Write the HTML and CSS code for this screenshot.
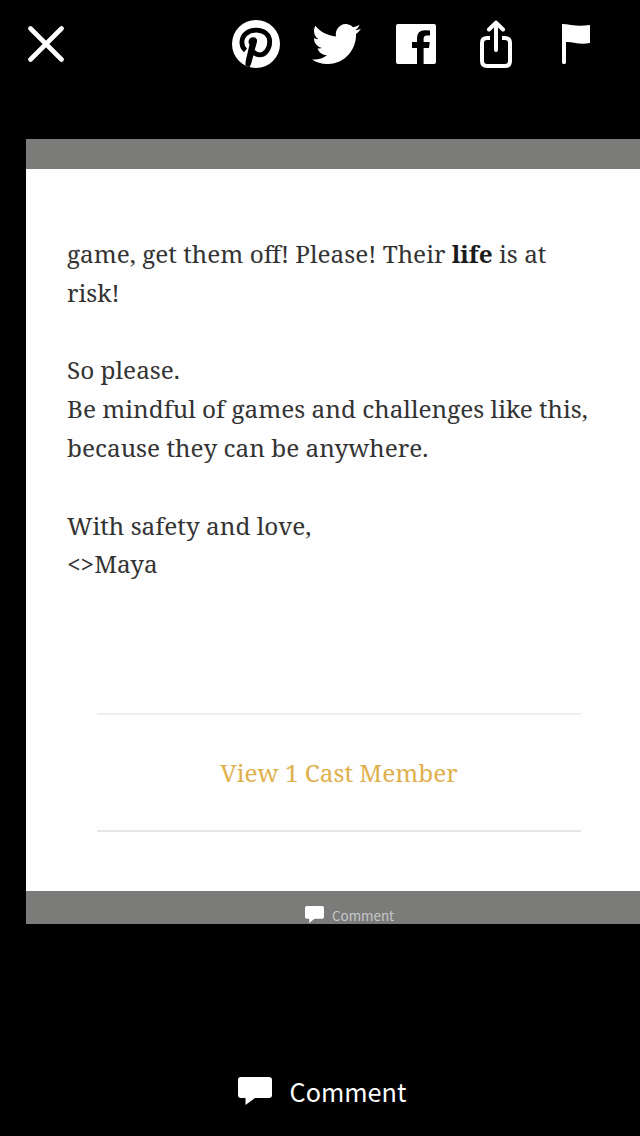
FILE: index.html
```
<!DOCTYPE html>
<html lang="en">
  <head>
    <meta charset="UTF-8" />
    <meta name="viewport" content="width=device-width, initial-scale=1.0" />
    <title>Comment</title>
    <link rel="stylesheet" href="styles.css">
  </head>
  <body>
    <div class="viewer">
      <header class="toolbar">
        <button class="close-btn" aria-label="Close">
          <svg width="36" height="36" viewBox="0 0 36 36">
            <path d="M2.5 2.5 33.5 33.5M33.5 2.5 2.5 33.5" fill="none" stroke="#fff" stroke-width="4.6" stroke-linecap="round" />
          </svg>
        </button>
        <nav class="share-list">
          <button aria-label="Pinterest">
            <svg width="48" height="48" viewBox="0 0 48 48">
              <defs>
                <clipPath id="pin-circle"><circle cx="24" cy="24" r="24" /></clipPath>
              </defs>
              <circle cx="24" cy="24" r="24" fill="#fff" />
              <g clip-path="url(#pin-circle)">
                <path d="M13.500 30.300C11 28.400 9.900 25.500 9.900 22.200C9.900 15.300 15.700 10.100 24.300 10.100C32 10.100 37.700 14.700 37.700 21.500C37.700 29 33.300 34.900 27.500 34.900C24.800 34.900 22.300 33.500 21.200 31.500" fill="none" stroke="#000" stroke-width="4.800" />
                <path d="M16.600 21C17 18.600 18.800 17.200 21.200 17.200C23.900 17.200 25.300 18.900 25 21.500C24.600 24 23.200 27.500 22.700 30.500L19.500 42.500Q18.600 45.500 16.700 49L13.500 48Q13.200 43 14 39.500L17.500 24.800Q16.300 23 16.600 21Z" fill="#000" />
              </g>
            </svg>
          </button>
          <button aria-label="Twitter">
            <svg width="49" height="40" viewBox="0 2.250 24 19.500" preserveAspectRatio="none">
              <path fill="#fff" d="M23.953 4.570a10 10 0 0 1-2.825.775 4.958 4.958 0 0 0 2.163-2.723c-.951.555-2.005.959-3.127 1.184a4.920 4.920 0 0 0-8.384 4.482C7.690 8.095 4.067 6.130 1.640 3.162a4.822 4.822 0 0 0-.666 2.475c0 1.710.870 3.213 2.188 4.096a4.904 4.904 0 0 1-2.228-.616v.060a4.923 4.923 0 0 0 3.946 4.827 4.996 4.996 0 0 1-2.212.085 4.936 4.936 0 0 0 4.604 3.417 9.867 9.867 0 0 1-6.102 2.105c-.390 0-.779-.023-1.170-.067a13.995 13.995 0 0 0 7.557 2.209c9.053 0 13.998-7.496 13.998-13.985 0-.210 0-.420-.015-.630A9.935 9.935 0 0 0 24 4.590z" />
            </svg>
          </button>
          <button aria-label="Facebook">
            <svg width="40" height="40" viewBox="0 0 40 40">
              <rect width="40" height="40" rx="2" fill="#fff" />
              <path d="M21 40V24H16V18H21V14.500Q21 6.300 29 6.300Q32 6.300 34 6.600V11.600H31Q27.600 11.600 27.600 15V18H33.700L33 24H27.600V40Z" fill="#000" />
            </svg>
          </button>
          <button aria-label="Share">
            <svg width="32" height="48" viewBox="0 0 32 48" fill="none" stroke="#fff" stroke-width="4">
              <path d="M10 18H7Q2 18 2 23V41Q2 46 7 46H25Q30 46 30 41V23Q30 18 25 18H22" />
              <path d="M16 30V3M9 9.500 16 2.700 23 9.500" stroke-linecap="round" stroke-linejoin="round" />
            </svg>
          </button>
          <button aria-label="Report">
            <svg width="28" height="40" viewBox="0 0 28 40">
              <path d="M0 0Q4 0 9 1.100Q18 2.500 28 1V19Q20 20.600 12 18.700Q8 17.800 4 18V38.500Q4 40 2 40Q0 40 0 38.500Z" fill="#fff" />
            </svg>
          </button>
        </nav>
      </header>

      <main class="photo">
        <div class="photo-bar"></div>
        <div class="page">
          <div class="story">
            <p>game, get them off! Please! Their <b>life</b> is at<br />risk!</p>
            <p>So please.<br />Be mindful of games and challenges like this,<br />because they can be anywhere.</p>
            <p>With safety and love,<br />&lt;&gt;Maya</p>
          </div>
          <div class="cast">View 1 Cast Member</div>
        </div>
        <div class="photo-bar photo-footer">
          <svg width="19" height="17" viewBox="0 0 34 28" preserveAspectRatio="none">
            <path d="M3 0H31Q34 0 34 3V18Q34 21 31 21H17L7.500 28V21H3Q0 21 0 18V3Q0 0 3 0Z" fill="#fff" />
          </svg>
          <span>Comment</span>
        </div>
      </main>

      <footer class="comment-bar">
        <svg width="34" height="28" viewBox="0 0 34 28">
          <path d="M3 0H31Q34 0 34 3V18Q34 21 31 21H17L7.500 28V21H3Q0 21 0 18V3Q0 0 3 0Z" fill="#fff" />
        </svg>
        <span>Comment</span>
      </footer>
    </div>
  </body>
</html>
```

FILE: styles.css
```
* {
  box-sizing: border-box;
}

body {
  margin: 0;
  background: #000;
}

.viewer {
  display: flex;
  flex-direction: column;
  width: 640px;
  height: 1136px;
  overflow: hidden;
  background: #000;
}

button {
  display: flex;
  justify-content: center;
  align-items: center;
  padding: 0;
  border: none;
  background: none;
  cursor: pointer;
}

.toolbar {
  display: flex;
  justify-content: space-between;
  height: 88px;
  padding: 0 24px 0 28px;
}

.share-list {
  display: grid;
  grid-template-columns: repeat(5, 80px);
}

.photo {
  display: flex;
  flex-direction: column;
  height: 785px;
  margin: 51px 0 0 26px;
  overflow: hidden;
  background: #fefefe;
}

.photo-bar {
  height: 30px;
  background: #7b7c79;
}

.page {
  height: 722px;
  padding: 66px 0 0 41px;
  font-family: "Noto Serif", "DejaVu Serif", serif;
  font-size: 24.35px;
}

.story {
  height: 478px;
  line-height: 38.8px;
  color: #333;
  white-space: nowrap;
}

.story p {
  margin: 0 0 38.8px;
}

.story b {
  color: #1c1c1c;
}

.cast {
  display: flex;
  justify-content: center;
  align-items: center;
  width: 484px;
  height: 119px;
  margin-left: 30px;
  border-top: 2px solid #efefef;
  border-bottom: 2px solid #e6e6e6;
  color: #e0b04c;
}

.photo-footer {
  display: flex;
  gap: 8px;
  height: 33px;
  padding: 15px 0 0 279px;
  font-family: "Noto Sans CJK SC", sans-serif;
  font-size: 13.4px;
  line-height: 18px;
  color: #c8c8c8;
}

.comment-bar {
  display: flex;
  justify-content: center;
  align-items: center;
  gap: 18px;
  height: 88px;
  margin-top: auto;
  padding: 0 0 3px 4px;
  font-family: "Noto Sans CJK SC", sans-serif;
  font-size: 25.2px;
  color: #fff;
}
```
